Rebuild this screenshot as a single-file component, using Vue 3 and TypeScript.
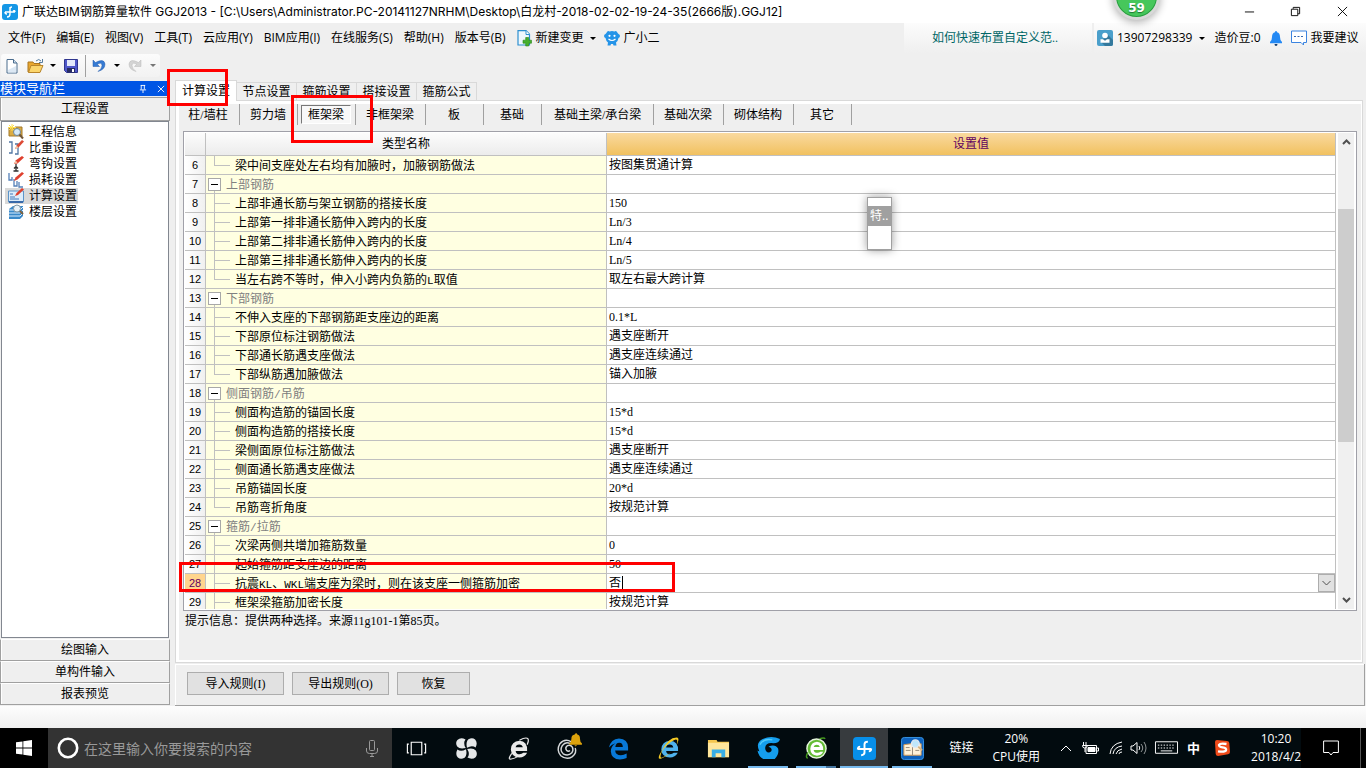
<script setup lang="ts">
import { ref } from 'vue'

interface Row {
  no: number
  name: string
  value: string
  kind: 'group' | 'item' | 'last'
}

const menus: string[] = ['文件(F)', '编辑(E)', '视图(V)', '工具(T)', '云应用(Y)', 'BIM应用(I)', '在线服务(S)', '帮助(H)', '版本号(B)']
const modules: string[] = ['工程信息', '比重设置', '弯钩设置', '损耗设置', '计算设置', '楼层设置']
const tabs: string[] = ['计算设置', '节点设置', '箍筋设置', '搭接设置', '箍筋公式']
const members: string[] = ['柱/墙柱', '剪力墙', '框架梁', '非框架梁', '板', '基础', '基础主梁/承台梁', '基础次梁', '砌体结构', '其它']

const activeModule = ref('计算设置')
const activeTab = ref('计算设置')
const activeMember = ref('框架梁')
const editing = ref('否')
const query = ref('')

const rows: Row[] = [
  { no: 6, name: '梁中间支座处左右均有加腋时，加腋钢筋做法', value: '按图集贯通计算', kind: 'last' },
  { no: 7, name: '上部钢筋', value: '', kind: 'group' },
  { no: 8, name: '上部非通长筋与架立钢筋的搭接长度', value: '150', kind: 'item' },
  { no: 9, name: '上部第一排非通长筋伸入跨内的长度', value: 'Ln/3', kind: 'item' },
  { no: 10, name: '上部第二排非通长筋伸入跨内的长度', value: 'Ln/4', kind: 'item' },
  { no: 11, name: '上部第三排非通长筋伸入跨内的长度', value: 'Ln/5', kind: 'item' },
  { no: 12, name: '当左右跨不等时，伸入小跨内负筋的L取值', value: '取左右最大跨计算', kind: 'last' },
  { no: 13, name: '下部钢筋', value: '', kind: 'group' },
  { no: 14, name: '不伸入支座的下部钢筋距支座边的距离', value: '0.1*L', kind: 'item' },
  { no: 15, name: '下部原位标注钢筋做法', value: '遇支座断开', kind: 'item' },
  { no: 16, name: '下部通长筋遇支座做法', value: '遇支座连续通过', kind: 'item' },
  { no: 17, name: '下部纵筋遇加腋做法', value: '锚入加腋', kind: 'last' },
  { no: 18, name: '侧面钢筋/吊筋', value: '', kind: 'group' },
  { no: 19, name: '侧面构造筋的锚固长度', value: '15*d', kind: 'item' },
  { no: 20, name: '侧面构造筋的搭接长度', value: '15*d', kind: 'item' },
  { no: 21, name: '梁侧面原位标注筋做法', value: '遇支座断开', kind: 'item' },
  { no: 22, name: '侧面通长筋遇支座做法', value: '遇支座连续通过', kind: 'item' },
  { no: 23, name: '吊筋锚固长度', value: '20*d', kind: 'item' },
  { no: 24, name: '吊筋弯折角度', value: '按规范计算', kind: 'last' },
  { no: 25, name: '箍筋/拉筋', value: '', kind: 'group' },
  { no: 26, name: '次梁两侧共增加箍筋数量', value: '0', kind: 'item' },
  { no: 27, name: '起始箍筋距支座边的距离', value: '50', kind: 'item' },
  { no: 28, name: '抗震KL、WKL端支座为梁时，则在该支座一侧箍筋加密', value: '否', kind: 'item' },
  { no: 29, name: '框架梁箍筋加密长度', value: '按规范计算', kind: 'item' }
]

// Splits a label into runs so that Latin letters can take a half-width face.
const runs = (text: string): string[] => text.split(/([A-Za-z/]+)/).filter(Boolean)
const isLatin = (text: string): boolean => /^[A-Za-z/]/.test(text)
</script>

<template>
  <div class="screen">
    <header class="titlebar">
      <svg class="app-icon" viewBox="0 0 16 16"><rect width="16" height="16" rx="3" fill="#1597e6" /><path d="M3 8h10M8 3v7q0 3-3 3M8 5q0-2 2-2M3 8q0 2 2 2M13 8q0-2-2-1" fill="none" stroke="#fff" stroke-width="1.4" /></svg>
      <h1>广联达BIM钢筋算量软件 GGJ2013 - [C:\Users\Administrator.PC-20141127NRHM\Desktop\白龙村-2018-02-02-19-24-35(2666版).GGJ12]</h1>
      <div class="window-buttons">
        <button type="button" aria-label="最小化"><svg viewBox="0 0 12 12"><path d="M1 6.500h10" /></svg></button>
        <button type="button" aria-label="还原"><svg viewBox="0 0 12 12"><path d="M1.500 3.500h7v7h-7zM3.500 3v-1.500h7v7h-2" /></svg></button>
        <button type="button" aria-label="关闭"><svg viewBox="0 0 12 12"><path d="M1 1l10 10M11 1L1 11" /></svg></button>
      </div>
    </header>

    <nav class="menubar">
      <div class="menus">
        <button v-for="m in menus" :key="m" type="button">{{ m }}</button>
        <button type="button" class="with-icon change">
          <svg class="i15" viewBox="0 0 15 16"><path d="M1 .7h8l3.500 3.500V15H1z" fill="#eef7fd" stroke="#2d8fd0" stroke-width="1.200" /><path d="M9 .7v3.800h3.500" fill="#fff" stroke="#2d8fd0" /><path d="M8.700 7.500h3v2.700h2.800v3h-2.800V16h-3v-2.800H6v-3h2.700z" fill="#45b02c" stroke="#26831a" stroke-width=".6" /></svg>
          新建变更<i class="arrow"></i>
        </button>
        <button type="button" class="with-icon">
          <svg class="i16" viewBox="0 0 16 16"><path d="M3 2q1-1.800 2.500-.6 2.500-.8 5 0Q12 .2 13 2q.500 1.200 1.500 2 1.500.500 1.500 2 0 1.500-1.500 2-.5 3-2.500 4.500l.5 3H9.500L9 14H7l-.5 1.500h-3l.5-3Q2 11 1.500 8 0 7.500 0 6q0-1.500 1.500-2Q2.500 3.200 3 2z" fill="#2594e8" /><circle cx="5.500" cy="5.800" r="1.100" fill="#fff" /><circle cx="10.500" cy="5.800" r="1.100" fill="#fff" /><path d="M4.500 9q3.500 3 7 0" stroke="#fff" stroke-width="1.200" fill="none" /></svg>
          广小二
        </button>
      </div>
      <a href="#" class="tip">如何快速布置自定义范..</a>
      <div class="account">
        <button type="button" class="with-icon user">
          <svg class="i16" viewBox="0 0 16 16"><rect width="16" height="16" rx="2" fill="#4a9fcb" /><path d="M10 4l6 6v4q0 2-2 2H8l-4-4z" fill="#34799d" /><circle cx="8" cy="5.500" r="2.800" fill="#fff" /><path d="M3.500 9.200h2.500l2 1.500 2-1.500h2.500v3.500h-9z" fill="#fff" /></svg>
          13907298339<i class="arrow"></i>
        </button>
        <span>造价豆:0</span>
        <button type="button" aria-label="通知"><svg class="bell" viewBox="0 0 12 15"><path d="M6 0q1 0 1 1.200Q10 2 10 6q0 3.500 2 5v1.200H0V11q2-1.500 2-5 0-4 3-4.800Q5 0 6 0z" fill="#2489f4" /><path d="M4.500 13h3q0 2-1.500 2t-1.500-2z" fill="#173f70" /></svg></button>
        <button type="button" class="with-icon">
          <svg class="i16" viewBox="0 0 16 16"><path d="M.5 1h15v11.500h-3V15l-2.500-2.500H.5z" fill="#fff" stroke="#3b84e0" /><path d="M3 6.500h2m1.500 0h2m1.500 0h2" stroke="#3569b2" /></svg>
          我要建议
        </button>
      </div>
      <div class="speed" aria-label="加速球">59</div>
    </nav>

    <div class="toolbar">
      <div class="tools">
        <button type="button" aria-label="新建"><svg class="i16" viewBox="0 0 16 16"><path d="M3 1.500h6.500L13 5v10H3z" fill="#fff" stroke="#4b6c8d" /><path d="M9.500 1.500V5H13" fill="#cfe0ef" stroke="#4b6c8d" /><path d="M4 12l8-4v6.500H4z" fill="#dce8f4" /></svg></button>
        <button type="button" class="open" aria-label="打开"><svg class="i17" viewBox="0 0 17 16"><path d="M1 4h5l1 1.500h6V14H1z" fill="#e9a72e" stroke="#a87520" /><path d="M4 7.500h12L13 14.500H1.500z" fill="#fbd56c" stroke="#b9852b" /><path d="M9 3q3-3 5 0M15.500 1v3.500H12" stroke="#567da0" fill="none" /></svg><i class="arrow"></i></button>
        <button type="button" aria-label="保存"><svg class="i16" viewBox="0 0 16 16"><path d="M1.500 1.500h13v13h-11l-2-2z" fill="#4f57c9" stroke="#30368e" /><path d="M4 2h8v6H4z" fill="#e4e9fa" /><path d="M4 10h8v4.500H4z" fill="#262b61" /><path d="M9 11h2v3H9z" fill="#fff" /></svg></button>
        <span class="rule"></span>
        <button type="button" class="undo" aria-label="撤销"><svg class="i16" viewBox="0 0 16 16"><path d="M1 2v6.500h6.500L5.300 6.300Q10 3.500 10 7.500q0 3-4 6 7-2 7-7.500Q12 0 3.500 4.500z" fill="#367bd4" stroke="#245baa" stroke-width=".5" /></svg><i class="arrow"></i></button>
        <button type="button" class="redo" aria-label="重做"><svg class="i16" viewBox="0 0 16 16"><path d="M14 2v6.500H7.500l2.200-2.200Q5 3.500 5 7.500q0 3 4 6-7-2-7-7.500Q3 0 11.500 4.500z" fill="#d4d4d4" stroke="#b9b9b9" stroke-width=".5" /></svg><i class="arrow"></i></button>
      </div>
    </div>

    <div class="workspace">
      <aside class="sidebar">
        <div class="side-title"><h2>模块导航栏</h2>
          <button type="button" aria-label="固定"><svg viewBox="0 0 9 9"><path d="M2.500 0v5M6 0v5M2 .5h5M1 5.500h7M4.500 5.500V9" stroke="#fff" /></svg></button>
          <button type="button" aria-label="关闭"><svg viewBox="0 0 9 9"><path d="M1 1l7 7M8 1L1 8" stroke="#fff" /></svg></button>
        </div>
        <button type="button" class="section">工程设置</button>
        <ul class="modules">
          <li v-for="(m, i) in modules" :key="m">
            <button type="button" :class="{ on: m === activeModule }" @click="activeModule = m">
              <svg class="i16" viewBox="0 0 16 16">
                <g v-if="i === 0"><path d="M1 4h5l1-1h7v9H1z" fill="#dbac43" stroke="#a3782a" /><path d="M4 0v7M0 3.500h8M1 1l5 5M6 1L1 6" stroke="#ffe04e" /><circle cx="9" cy="8" r="3.500" fill="#d5e9f8" stroke="#6d8496" /><path d="M11.500 10.500L15 14.500" stroke="#725738" stroke-width="2" /></g>
                <g v-else-if="i === 1"><path d="M1 2h3v11H1M7 4h3v10H7" fill="none" stroke="#5176a3" stroke-width="1.300" /><path d="M7 9l1.500-3.500L14 0l2 1.500-5.500 6z" fill="#dd4a35" /><path d="M7 9l1.500-3.500 2 2z" fill="#f1ccaa" /></g>
                <g v-else-if="i === 2"><path d="M5.500 15h5M8 8v7M6 12.500l2-2 2 2" fill="none" stroke="#2e2e2e" stroke-width="1.300" /><path d="M6 8l1.500-3.500L14 0l2 1.500-6.500 6z" fill="#df402e" /><path d="M6 8l1.500-3.500 2 2z" fill="#efccad" /></g>
                <g v-else-if="i === 3"><path d="M1 1v7h3V5M6 7v7h3v-5M11 10v5h4" fill="none" stroke="#5681b9" stroke-width="1.300" /><path d="M6 9l1.500-3.500L14 0l2 1.500-6.500 6z" fill="#df402e" /></g>
                <g v-else-if="i === 4"><path d="M.5 3h15v11H.5z" fill="#dcecfa" stroke="#5c94c9" /><path d="M2 6h3M2 9h5M2 11h9" stroke="#4379ba" /><path d="M1 14h14" stroke="#386aaa" stroke-width="2" /><path d="M7 8l1.500-3L14 0l2 1.500-6 5.500z" fill="#df402e" /></g>
                <g v-else><path d="M1 5l4-3h10v10l-3 3H1z" fill="#3a88c8" /><path d="M1 6h11l3-3M1 9h11l3-3M1 12h11l3-3" stroke="#ddefff" fill="none" /><circle cx="9" cy="4.500" r="3.500" fill="#e8f2f8" stroke="#8297a5" /><path d="M12 7l3 3" stroke="#796040" stroke-width="2" /></g>
              </svg>{{ m }}
            </button>
          </li>
        </ul>
        <button type="button" class="section">绘图输入</button>
        <button type="button" class="section">单构件输入</button>
        <button type="button" class="section">报表预览</button>
      </aside>

      <main class="content">
        <div class="tabs" role="tablist">
          <button v-for="t in tabs" :key="t" type="button" role="tab" :class="{ on: t === activeTab }" @click="activeTab = t">{{ t }}</button>
        </div>
        <section class="panel">
          <div class="members">
            <div v-for="m in members" :key="m" class="member" :class="{ long: m.length > 6 }">
              <button type="button" :class="{ on: m === activeMember }" @click="activeMember = m">{{ m }}</button>
            </div>
          </div>
          <div class="grid-frame">
            <div class="grid-view">
              <table>
                <colgroup><col class="c-no" /><col class="c-name" /><col /></colgroup>
                <thead><tr><th></th><th>类型名称</th><th class="picked">设置值</th></tr></thead>
                <tbody>
                  <tr v-for="r in rows" :key="r.no">
                    <th scope="row" :class="{ current: r.no === 28 }">{{ r.no }}</th>
                    <td class="name" :class="r.kind"><button v-if="r.kind === 'group'" type="button" class="fold" aria-label="折叠"></button><span v-for="(part, k) in runs(r.name)" :key="k" :class="{ half: isLatin(part) }">{{ part }}</span></td>
                    <td v-if="r.no === 28" class="value">
                      <div class="editor">
                        <input v-model="editing" type="text" aria-label="设置值" />
                        <button type="button" aria-label="选择"><svg viewBox="0 0 9 6"><path d="M.5 1l4 4 4-4" /></svg></button>
                      </div>
                    </td>
                    <td v-else class="value">{{ r.value }}</td>
                  </tr>
                </tbody>
              </table>
            </div>
            <div class="scroll">
              <button type="button" aria-label="向上"><svg viewBox="0 0 9 6"><path d="M1 5l3.500-3.500L8 5" /></svg></button>
              <div class="track"><div class="thumb"></div></div>
              <button type="button" aria-label="向下"><svg viewBox="0 0 9 6"><path d="M1 1l3.500 3.500L8 1" /></svg></button>
            </div>
          </div>
          <p class="hint">提示信息：提供两种选择。来源11g101-1第85页。</p>
        </section>
        <div class="actions">
          <button type="button">导入规则(I)</button>
          <button type="button">导出规则(O)</button>
          <button type="button" class="short">恢复</button>
        </div>
      </main>
    </div>
    <div class="statusbar"></div>

    <footer class="taskbar">
      <button type="button" class="start" aria-label="开始"><svg class="i16" viewBox="0 0 16 16"><path d="M0 2.300L6.500 1.400v6.200H0zM7.300 1.300L16 0v7.600H7.300zM0 8.400h6.500v6.200L0 13.700zM7.300 8.400H16V16l-8.700-1.300z" fill="#fff" /></svg></button>
      <div class="search">
        <svg class="ring" viewBox="0 0 22 22"><circle cx="11" cy="11" r="9.200" fill="none" stroke="#fff" stroke-width="2.600" /></svg>
        <input v-model="query" type="text" placeholder="在这里输入你要搜索的内容" aria-label="搜索" />
        <svg class="mic" viewBox="0 0 12 17"><rect x="3.500" y=".5" width="5" height="10" rx="1" /><path d="M.5 8v3q0 2.500 3 2.500h5q3 0 3-2.500V8M6 13.500V16M4 16.500h4" /></svg>
      </div>
      <div class="apps">
        <button type="button" class="app" aria-label="任务视图"><svg viewBox="0 0 24 24"><path d="M6.500 5.500h11v13h-11zM4 7.500H2.500v9H4M20 7.500h1.500v9H20" fill="none" stroke="#fff" stroke-width="1.200" /></svg></button>
        <button type="button" class="app" aria-label="助手"><svg viewBox="0 0 24 24"><g fill="#e5e7e8"><path d="M11.200 11.500Q5 13 2.300 10 0 6 2.500 3 6 0 11 2.500 8 6 11.200 11.500z" /><path d="M12.500 11.200Q11 5 14 2.300 18 0 21 2.500q3 3.500.5 8.500-3.500-3-9 .2z" /><path d="M12.800 12.500Q19 11 21.700 14q2.300 4-.2 7-3.500 3-8.500.5 3-3.500-.2-9z" /><path d="M11.500 12.800Q13 19 10 21.700 6 24 3 21.500q-3-3.500-.5-8.500 3.500 3 9-.2z" /></g></svg></button>
        <button type="button" class="app third" aria-label="浏览器"><svg viewBox="0 0 24 24"><path d="M21 14.500H9q.5 3.500 4 3.500 2.500 0 4-1.500h4Q18.500 21.500 13 21.500q-8.500-.5-9-8.500.5-8.500 9-9 8.500.5 8 10.500zM9 10.800h7.500Q16 7.700 12.700 7.700T9 10.800z" fill="#eaeaea" /><path d="M5 17Q0 24 4.500 23 8 22.500 11 20.500M13 3.500Q20-.5 22 2q1 2-1 6" fill="none" stroke="#eaeaea" stroke-width="1.200" /></svg></button>
        <button type="button" class="app" aria-label="消息"><svg viewBox="0 0 24 24"><path d="M15 5Q8 1 3 7-1 14 4 19.500q6 5 12 1 5-4 3-9M14 7Q9 4 5.500 9q-3 5 1 8.500 5 3 9-1 2-3 .5-6-2-3-5-1.500-3 2-1 5 2 1.500 3.500 0" fill="none" stroke="#d5d8da" stroke-width="1.500" /><path d="M20-4q1 0 1.200 1.500Q24-2 24 2q0 3 2 4.500V8H13V6.500q2-1.500 2-4.500 0-4 3.500-4.500Q19-4 20-4z" fill="#dca20c" /><path d="M18 8.500h3L19.500 10z" fill="#dca20c" /></svg></button>
        <button type="button" class="app" aria-label="Edge"><svg viewBox="0 0 24 24"><path d="M2 11Q4 2 12.500 1.500 22 2 22 11v3H8.500q.5 5 6 5 3 0 6-1.700V22q-3 1.500-7 1.500Q4.500 23 4 15q0-5.500 5-8.500-4 1-7 4.500zM8.700 10.500h7.800Q16.500 6 12.700 6q-3.500 0-4 4.500z" fill="#0878d7" /></svg></button>
        <button type="button" class="app" aria-label="IE"><svg viewBox="0 0 24 24"><path d="M22 14.500H9.500q.5 3.500 4 3.500 2.500 0 4-1.500h4.200Q19 21.500 13.500 21.500q-8.500-.5-9-8.500.5-8.500 9-9 9 .5 8.500 10.500zM9.500 11H17q-.5-3.300-3.700-3.300T9.500 11z" fill="#4fb3ed" /><path d="M4.500 15Q-1 24 4.500 22.500q5-1.500 10-6.500-9 6.500-10.500 5.500-1-1.500 1-6.500Q10 7 18 3q4-1.500 3 3l-.5 2.500Q24 1 21 .500 12 0 4.500 15z" fill="#f5cb25" /></svg></button>
        <button type="button" class="app" aria-label="文件资源管理器"><svg viewBox="0 0 24 24"><path d="M1 3h9l1 2h12v16H1z" fill="#f5c64f" /><path d="M1 6h22v15H1z" fill="#ffe69b" /><path d="M5 13h14v8h-4v-4H9v4H5z" fill="#39aee5" /></svg></button>
        <button type="button" class="app run" aria-label="广联达"><svg viewBox="0 0 24 24"><path d="M24 2q-1 4.500-7 4.500-8-1-8.500 5Q9 17 13.500 16q3-1.500 1-4.500L12 10q7-3 10 2 1.500 6-3.500 11H6.500q-5-3-6-9l2 1Q-2 6 6 2q9-4 18 0z" fill="#159eed" /><path d="M3 8q4-7 13-5" stroke="#51cafa" stroke-width="1.500" fill="none" /></svg></button>
        <button type="button" class="app run multi" aria-label="安全浏览器"><svg viewBox="0 0 24 24"><circle cx="12" cy="12" r="10" fill="#63bb35" stroke="#e5f5dc" stroke-width="1.500" /><path d="M19 13.500H9q.5 3 4 3 2 0 3-1h3q-2 4-6.500 4Q6 19 5.500 12.500 6 5.500 12.500 5 19 5.500 19 13.500zM9 10.500h6.500Q15 8 12.300 8T9 10.500z" fill="#fff" /><path d="M3 22Q0 22 3 16M15 2q5-2 6 0" fill="none" stroke="#43951d" stroke-width="1.500" /></svg></button>
        <button type="button" class="app run active" aria-label="广联达BIM钢筋算量软件"><svg viewBox="0 0 24 24"><rect width="24" height="24" rx="4" fill="#078fe9" /><path d="M5 12.500h14M12 17V7.500Q12 5 15.500 5M12 12.500V16q0 3-3.500 3M5 13q0-3 2.500-3M19 12q0 3-2.500 3" fill="none" stroke="#fff" stroke-width="2" /></svg></button>
        <button type="button" class="app run" aria-label="图集"><svg viewBox="0 0 24 24"><rect x=".5" y=".5" width="23" height="23" rx="3" fill="#0e62bd" stroke="#3794e5" /><path d="M3 8l8-1 2 1 8-1v12H3z" fill="#fff2d9" stroke="#d49952" /><path d="M12 9v10M5 11h4M5 14h5M15 14h4" stroke="#998b79" /><circle cx="15" cy="7" r="4" fill="#bee7fc" stroke="#e2eaf2" stroke-width="1.500" /><path d="M18 10l4 4" stroke="#d8b580" stroke-width="2" /></svg></button>
      </div>
      <div class="tray">
        <span class="links">链接</span>
        <span class="cpu">20%<br />CPU使用</span>
        <svg class="t-caret" viewBox="0 0 12 8"><path d="M1 7l5-5 5 5" /></svg>
        <svg class="t-battery" viewBox="0 0 17 12"><path d="M4 3.500h10.500v8H4zM15 6h1.500v3H15" /><path d="M6 5.500h7v4H6z" fill="#fff" /><path d="M1.500 0v3M4 0v3M.5 3.500h5Q5 6 2.700 6T.5 3.500M3 6v4" /></svg>
        <svg class="t-wifi" viewBox="0 0 14 14"><path d="M1 13Q2 3 13 1M4 13q1-7 9-8M7 13q1-4 6-5M10 13q0-2 3-2" /></svg>
        <svg class="t-volume" viewBox="0 0 17 14"><path d="M1 5h2l4-3.500v11L3 9H1zM9 5q1.500 2 0 4" /><path d="M11 3q3.500 4 0 8M14 1q4 6 0 12" opacity=".55" /></svg>
        <svg class="t-keyboard" viewBox="0 0 24 14"><path d="M.5.5h23v12H.5zM6 10h12" /><path d="M3 4h18M3 7h18" stroke-dasharray="1.500 1.500" /></svg>
        <span class="ime">中</span>
        <svg class="t-sogou" viewBox="0 0 16 16"><path d="M1 2q0-2 2-2l10 1q2 0 2.300 2l.7 9q0 2-2 2.300L4 16q-2 0-2.300-2z" fill="#f04b1a" /><path d="M12.500 4Q6 3 5 4.800q-.5 2 3.500 2.500 4.500.7 3.500 3-1 2.200-8 1" fill="none" stroke="#fff" stroke-width="2.300" /></svg>
        <time>10:20<br />2018/4/2</time>
      </div>
      <button type="button" class="notices" aria-label="通知中心"><svg viewBox="0 0 16 16"><path d="M.6 1h14.800v11.500H10L8 15l-2-2.500H.6z" /></svg></button>
    </footer>

    <aside class="floater"><div>特..</div></aside>
    <div class="mark tab-mark"></div>
    <div class="mark member-mark"></div>
    <div class="mark row-mark"></div>
  </div>
</template>

<style>
body { margin: 0; overflow: hidden; }
</style>

<style scoped>
.screen {
  --ui: "Open Sans", "Noto Sans CJK SC", sans-serif;
  --song: "Liberation Serif", "Noto Sans CJK SC", serif;
  position: relative;
  display: flex;
  flex-direction: column;
  height: 100vh;
  overflow: hidden;
  background: #efefef;
  color: #000;
  font: 12px/16px var(--ui);
  white-space: nowrap;
}
* { box-sizing: border-box; }
button { display: flex; align-items: center; justify-content: center; margin: 0; padding: 0; border: 0; background: none; color: inherit; font: inherit; white-space: nowrap; }
input { min-width: 0; margin: 0; padding: 0; border: 0; outline: 0; background: none; color: inherit; font: inherit; }
svg { display: block; flex: none; overflow: visible; }
h1, h2, p, ul { margin: 0; padding: 0; font: inherit; list-style: none; }
.i15 { width: 15px; height: 16px; }
.i16 { width: 16px; height: 16px; }
.i17 { width: 17px; height: 16px; }
.arrow { width: 0; height: 0; border: 3px solid transparent; border-top-color: #000; border-bottom: 0; }

.titlebar { display: flex; align-items: center; flex: none; height: 23px; padding-left: 2px; background: #fff; }
.titlebar h1 { font-family: Inter, "Noto Sans CJK SC", sans-serif; }
.app-icon { width: 16px; height: 16px; margin-right: 4px; }
.window-buttons { display: flex; margin-left: auto; }
.window-buttons button { width: 46px; height: 21px; }
.window-buttons button:last-child { width: 48px; }
.window-buttons svg { width: 11px; height: 11px; fill: none; stroke: #000; }

.menubar { position: relative; display: flex; flex: none; height: 30px; }
.menus { display: flex; flex: 1; align-items: center; gap: 11px; padding-left: 8px; }
.with-icon { gap: 4px; }
.change .arrow { margin-left: 2px; }
.menus .change { margin-right: -3px; }
.tip { display: flex; align-items: center; width: 188px; padding-left: 28px; margin-right: 2px; background: linear-gradient(#fcfcfc, #efefef); color: #006666; font-family: var(--song); text-decoration: none; }
.account { display: flex; align-items: center; gap: 9px; width: 272px; padding-left: 3px; background: linear-gradient(#fcfcfc, #efefef); }
.account .arrow { margin-left: 3px; }
.account .bell { width: 12px; height: 15px; }
.speed { position: absolute; left: 1113px; top: -50px; display: flex; align-items: flex-end; justify-content: center; width: 47px; height: 47px; padding-bottom: 3px; border: 3px solid #d8d8d8; border-radius: 50%; background: #46c75b; box-shadow: inset 0 0 0 1px #2a9b41, 0 2px 8px #0005; color: #fff; font: bold 12px/12px "DejaVu Sans", sans-serif; text-shadow: 0 1px 1px #1c7530; }

.toolbar { flex: none; height: 27px; padding: 1px 0 0 1px; }
.tools { display: flex; align-items: center; width: 159px; height: 23px; padding-left: 3px; border-radius: 3px; background: linear-gradient(#fcfcfc, #f2f2f2); }
.open { gap: 6px; margin: 0 7px 0 7px; }
.rule { width: 1px; height: 22px; margin: 0 6px 0 6px; background: #a0a0a0; }
.undo { gap: 6px; }
.redo { gap: 7px; margin-left: 7px; }
.redo .arrow { border-top-color: #777; }

.workspace { display: flex; flex: 1; min-height: 0; font-family: var(--song); }
.sidebar { display: flex; flex-direction: column; flex: none; width: 170px; margin: 1px 0; }
.side-title { display: flex; align-items: center; height: 15px; background: #0055e5; color: #fff; font-size: 13px; line-height: 15px; }
.side-title h2 { flex: 1; }
.side-title button { width: 18px; height: 15px; }
.side-title svg { width: 8px; height: 8px; }
.section { flex: none; height: 22px; border: 1px solid #a0a0a0; border-top-color: #fff; box-shadow: inset 1px 0 #fff; }
.side-title + .section { height: 24px; margin-top: 1px; border-top-color: #a0a0a0; }
.modules { flex: 1; margin: 0 1px 1px; padding: 2px 2px; border: 1px solid #828790; background: #fff; }
.modules button { gap: 5px; height: 16px; padding: 0 1px 0 3px; margin-left: 1px; }
.modules .on { background: #d9d9d9; }

.content { display: flex; flex-direction: column; flex: 1; min-width: 0; margin: 0 1px 0 5px; }
.tabs { display: flex; align-items: flex-end; flex: none; height: 20px; }
.tabs button { width: 60px; height: 18px; border: 1px solid #d9d9d9; border-width: 1px 1px 0 0; }
.tabs .on { width: 62px; height: 21px; margin-bottom: -1px; border-left-width: 1px; background: #fff; z-index: 1; }
.panel { display: flex; flex-direction: column; flex: 1; min-height: 0; margin-right: 2px; padding: 0 5px; border: 1px solid #d9d9d9; box-shadow: inset 0 3px #fff, inset 3px 0 #fff, inset -1px -2px #fff; }
.members { display: flex; flex: none; height: 30px; margin-left: -3px; padding-top: 3px; }
.member { display: flex; align-items: center; justify-content: center; min-width: 58px; height: 21px; padding: 0 4px 0 3px; border-right: 1px solid #a0a0a0; }
.member:first-child { min-width: 62px; }
.member.long { min-width: 112px; padding: 0; }
.member button { height: 19px; padding: 0 6px; border: 1px solid transparent; }
.member .on { border-color: #777 #fff #fff #777; background: #f8f8f8; }

.grid-frame { display: flex; flex: 1; min-height: 0; margin-left: 2px; padding: 1px; border: 1px solid #a0a0a8; background: #fff; }
.grid-view { flex: 1; min-width: 0; overflow: hidden; }
table { width: 100%; border-collapse: separate; border-spacing: 0; table-layout: fixed; }
.c-no { width: 21px; }
.c-name { width: 401px; }
th, td { height: 19px; padding: 0; border: 0 solid #c0c0c0; border-width: 0 1px 1px 0; font-weight: normal; line-height: 16px; text-align: left; }
thead th { height: 23px; background: linear-gradient(#fcfcfc, #ececec); text-align: center; }
thead .picked { background: linear-gradient(#f9d99f, #f1c15f); color: #600060; }
tbody th { background: linear-gradient(90deg, #fff, #f0f0f0); font: 11px/16px "Liberation Sans", sans-serif; text-align: center; }
tbody .current { background: #ffd58d; color: #600060; }
.name { background: linear-gradient(#c0c0c0, #c0c0c0) 8px 9px / 16px 1px no-repeat, linear-gradient(#c0c0c0, #c0c0c0) 8px 0 / 1px 100% no-repeat, #ffffe1; padding: 2px 0 0 29px; line-height: 15px; }
.name.last { background-size: 16px 1px, 1px 10px, auto; }
.name.group { padding-left: 0; background: linear-gradient(#c0c0c0, #c0c0c0) 8px 15px / 1px 4px no-repeat, #ffffe1; color: #808080; }
.half { font: 11px/12px "Liberation Mono", monospace; }
.fold { float: left; width: 13px; height: 13px; margin: 0 5px 0 2px; border: 1px solid #a8a8a8; background: linear-gradient(#000, #000) 2px 5px / 7px 1px no-repeat, #fff; }
.value { padding-left: 2px; background: #fff; }
.editor { display: flex; align-items: center; height: 18px; }
.editor input { width: 14px; height: 14px; border-right: 1px solid #000; }
.editor button { width: 17px; height: 18px; margin-left: auto; border: 1px solid #adadad; background: #e1e1e1; }
.editor svg, .scroll svg { width: 9px; height: 6px; fill: none; stroke: #505050; }
.scroll svg { stroke-width: 2; }
.scroll { display: flex; flex-direction: column; width: 16px; margin: 0 1px 0 2px; background: #f0f0f0; }
.scroll button { height: 18px; }
.track { display: flex; flex-direction: column; flex: 1; padding-top: 58px; }
.thumb { height: 61%; background: #cdcdcd; }
.hint { flex: none; height: 51px; padding: 2px 0 0 4px; }
.actions { display: flex; gap: 8px; flex: none; height: 42px; padding: 8px 0 0 12px; margin-top: 1px; border: 1px solid #a0a0a0; border-width: 0 1px 1px 0; box-shadow: inset 1px 1px #fff; }
.actions button { width: 97px; height: 23px; border: 1px solid #adadad; background: #e1e1e1; }
.actions .short { width: 73px; }
.statusbar { flex: none; height: 22px; background: linear-gradient(#fdfdfd, #f0f0f0); }

.taskbar { display: flex; flex: none; height: 40px; background: #020b0f; color: #fff; }
.start { width: 48px; background: #000; }
.search { display: flex; align-items: center; width: 344px; padding: 0 14px 0 9px; background: #333; }
.ring { width: 22px; height: 22px; }
.search input { flex: 1; margin-left: 5px; height: 24px; font-size: 14px; }
.search input::placeholder { color: #999; opacity: 1; }
.mic { width: 12px; height: 17px; fill: none; stroke: #999; }
.apps { display: flex; gap: 2px; }
.app { position: relative; width: 48px; }
.third { margin-left: 2px; }
.run + .run { margin-left: -2px; }
.app svg { width: 23px; height: 23px; }
.run::after { position: absolute; right: 4px; bottom: 0; left: 4px; height: 2px; background: #76b9ed; content: ""; }
.multi::after { background: linear-gradient(90deg, #76b9ed 75%, #4576a0 75%); }
.active { background: #373b3e; }
.active::after { right: 0; left: 0; }
.tray { display: flex; align-items: center; flex: 1; justify-content: flex-end; font-size: 12px; }
.tray svg { fill: none; stroke: #fff; }
.cpu, time { text-align: center; line-height: 18px; }
.links { margin-right: 19px; }
.cpu { margin-right: 20px; }
.t-caret { width: 12px; height: 8px; margin-right: 10px; }
.t-battery { width: 17px; height: 12px; margin-right: 10px; }
.t-wifi { width: 14px; height: 14px; margin-right: 7px; }
.t-volume { width: 17px; height: 14px; margin-right: 8px; }
.t-keyboard { width: 23px; height: 14px; margin-right: 9px; }
.ime { margin-right: 14px; font-size: 13px; font-weight: bold; }
.tray .t-sogou { width: 16px; height: 16px; margin-right: 21px; stroke: none; }
.notices { width: 65px; border-right: 5px solid #000; background: #000; box-shadow: inset -1px 0 #555; }
.notices svg { width: 16px; height: 16px; fill: none; stroke: #fff; }

.floater { position: absolute; left: 867px; top: 197px; width: 25px; height: 53px; padding-top: 8px; border: 1px solid #a0a0a0; background: #fff; box-shadow: 0 0 10px #0006; }
.floater div { height: 20px; padding-left: 2px; background: #a0a0a0; color: #fff; line-height: 20px; }
.mark { position: absolute; z-index: 2; border: 3px solid #f00; pointer-events: none; }
.tab-mark { left: 167px; top: 69px; width: 61px; height: 37px; }
.member-mark { left: 291px; top: 95px; width: 82px; height: 48px; }
.row-mark { left: 179px; top: 562px; width: 496px; height: 30px; }
</style>
